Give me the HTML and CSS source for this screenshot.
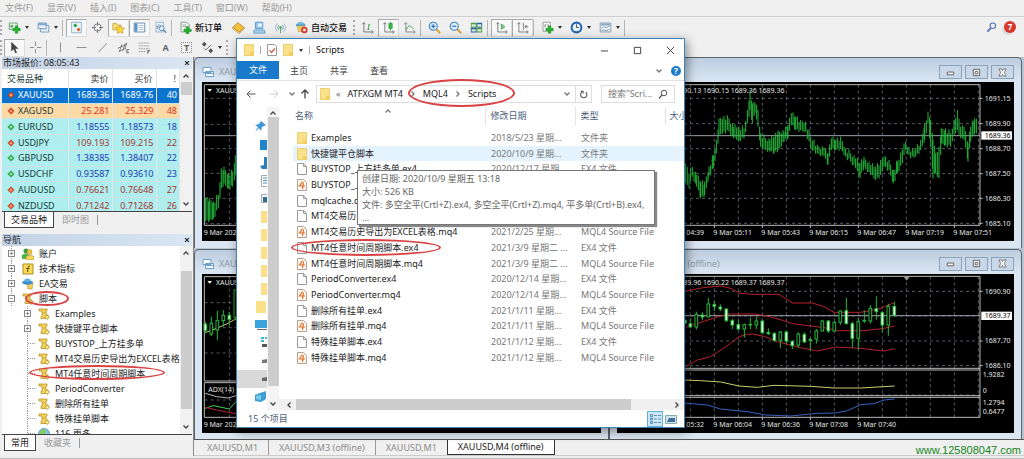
FILE: index.html
```html
<!DOCTYPE html>
<html lang="zh-CN">
<head>
<meta charset="utf-8">
<title>MetaTrader 4</title>
<link rel="stylesheet" href="styles.css">
</head>
<body>
<svg class="sprite" aria-hidden="true">
  <defs>
    <symbol id="newchart" viewBox="0 0 16 16"><path d="M1.500 2.500h10v8h-10z" fill="#dff0dc" stroke="#5f9a72"/><path d="M3 5h3v3H3z" fill="#5f9a72"/><path d="M9 6h3v3h3v3h-3v3H9v-3H6V9h3z" fill="#22b52b" stroke="#12801a" stroke-width=".6"/></symbol>
    <symbol id="profiles" viewBox="0 0 16 16"><path d="M4.500 5.500h10v8h-10z" fill="#fff" stroke="#5b86b0"/><path d="M1.500 2.500h10v7h-10z" fill="#e8f1fa" stroke="#5b86b0"/><path d="M2 3h9v2H2zM6 11h7" fill="#7fa8d0" stroke="#7fa8d0" stroke-width=".6"/></symbol>
    <symbol id="market" viewBox="0 0 16 16"><path d="M2 1.500h12v13H2z" fill="#eaf3fa" stroke="#7aa6cb"/><path d="M4 5l3-2 2 3-3 2z" fill="#28a43a"/><path d="M8 10l3-2 2 3-3 2z" fill="#d6612e"/></symbol>
    <symbol id="target" viewBox="0 0 16 16" fill="none" stroke="#666"><circle cx="8" cy="8" r="4.500"/><path d="M8 1v5M8 10v5M1 8h5M10 8h5"/></symbol>
    <symbol id="star" viewBox="0 0 16 16"><path d="M1 3h5l1 2h4v6H1z" fill="#f7dc75" stroke="#b8932c" stroke-width=".8"/><path d="M10 5l1.700 3.400 3.800.4-2.700 2.600.6 3.800L10 13.500l-3.400 1.700.6-3.800L4.500 8.800l3.800-.4z" fill="#ffd83a" stroke="#b8932c" stroke-width=".8"/></symbol>
    <symbol id="terminal" viewBox="0 0 16 16"><path d="M1.500 2.500h13v11h-13z" fill="#fff" stroke="#4a7aa8"/><path d="M2 3h3.500v10H2z" fill="#5d93c7"/><path d="M7 5.500h6M7 8h6M7 10.500h6" stroke="#9ab6d2"/></symbol>
    <symbol id="tester" viewBox="0 0 16 16"><path d="M2.500 1.500h9v12h-9z" fill="#edf4fb" stroke="#86a8c8"/><path d="M4 10V6M6 8V4M8 9V5" stroke="#4a7aa8"/><circle cx="9.500" cy="9" r="3" fill="#dcecf8" stroke="#557ea6"/><path d="M12 11l3 3.500" stroke="#557ea6" stroke-width="1.500"/></symbol>
    <symbol id="order" viewBox="0 0 16 16"><path d="M2.500 1.500h7l3 3v9h-10z" fill="#f4f7f4" stroke="#7b8c7b"/><path d="M4 5h5M4 7h6" stroke="#8ca08c"/><path d="M9 7h3v3h3v3h-3v3H9v-3H6v-3h3z" fill="#22b52b" stroke="#12801a" stroke-width=".6"/></symbol>
    <symbol id="book" viewBox="0 0 16 16"><path d="M1 8l6-6 8 6-6 6z" fill="#f2c13c" stroke="#b07c18"/><path d="M1 8v2l8 5.500 6-6V8l-6 6z" fill="#fff3c4" stroke="#b07c18" stroke-width=".7"/></symbol>
    <symbol id="person" viewBox="0 0 16 16"><path d="M3 1.500h9v8H3z" fill="#8fc4ee" stroke="#4f8fc4"/><path d="M6 3h5v4H6z" fill="#e9f6ff"/><path d="M1 11h13l1 4H1z" fill="#a9d0ee" stroke="#4f8fc4" stroke-width=".8"/></symbol>
    <symbol id="signal" viewBox="0 0 16 16" fill="none"><path d="M4 3a7 7 0 000 10M12 3a7 7 0 010 10" stroke="#8aa9c5"/><path d="M6 5a4 4 0 000 6M10 5a4 4 0 010 6" stroke="#5a8cb8"/><circle cx="8" cy="8" r="1.500" fill="#35a04a"/><path d="M8 9v6" stroke="#35a04a"/></symbol>
    <symbol id="auto" viewBox="0 0 16 16"><ellipse cx="7" cy="5" rx="6" ry="2.500" fill="#58a5d8"/><path d="M3 4a4 3 0 018 0z" fill="#79bce4"/><path d="M3 6l1 7h7l1-7z" fill="#f0ce66" stroke="#b18a28" stroke-width=".6"/><circle cx="11.500" cy="11" r="4" fill="#d8392b"/><path d="M10 9.500h3v3h-3z" fill="#fff"/></symbol>
    <symbol id="bars" viewBox="0 0 16 16" fill="none" stroke="#666"><path d="M3.500 2v11.500H15M1.500 4l2-2 2 2M13 11.500l2 2-2 2"/><path d="M9.500 4v7M9.500 5h2M7.500 10h2" stroke="#279a37"/></symbol>
    <symbol id="candles" viewBox="0 0 16 16" fill="none" stroke="#666"><path d="M3.500 2v11.500H15M1.500 4l2-2 2 2M13 11.500l2 2-2 2"/><path d="M10.500 1v11" stroke="#279a37"/><path d="M8.500 3h4v6h-4z" fill="#37bd45" stroke="#279a37"/></symbol>
    <symbol id="line" viewBox="0 0 16 16" fill="none" stroke="#777"><path d="M3.500 2v11.500H15M1.500 4l2-2 2 2M13 11.500l2 2-2 2"/><path d="M4 11c3-7 5-6 9-1" stroke="#279a37"/></symbol>
    <symbol id="zoomin" viewBox="0 0 16 16"><path d="M10 10l5 5" stroke="#d5a32c" stroke-width="2.500"/><circle cx="6.500" cy="6.500" r="5" fill="#dff0fb" stroke="#3f81bd" stroke-width="1.300"/><path d="M4 6.500h5M6.500 4v5" stroke="#2870b0" stroke-width="1.500"/></symbol>
    <symbol id="zoomout" viewBox="0 0 16 16"><path d="M10 10l5 5" stroke="#d5a32c" stroke-width="2.500"/><circle cx="6.500" cy="6.500" r="5" fill="#dff0fb" stroke="#3f81bd" stroke-width="1.300"/><path d="M4 6.500h5" stroke="#2870b0" stroke-width="1.500"/></symbol>
    <symbol id="tile" viewBox="0 0 16 16"><path d="M1 2h7v6H1zM8 8h7v6H8z" fill="#4a9d3f"/><path d="M8 2h7v6H8zM1 8h7v6H1z" fill="#2c64a8"/><path d="M2 4h5v3H2zM9 4h5v3H9zM2 10h5v3H2zM9 10h5v3H9z" fill="#d9ecd4"/></symbol>
    <symbol id="scroll" viewBox="0 0 16 16" fill="none" stroke="#666"><path d="M3.500 2v11.500H15M1.500 4l2-2 2 2M13 11.500l2 2-2 2"/><path d="M8 4l4 3-4 3z" fill="#9bd6a0" stroke="#279a37"/></symbol>
    <symbol id="shift" viewBox="0 0 16 16" fill="none" stroke="#666"><path d="M3.500 2v11.500H15M1.500 4l2-2 2 2M13 11.500l2 2-2 2M9 2v9"/><path d="M15 7h-4l2-2M11 7l2 2" stroke="#555"/></symbol>
    <symbol id="indic" viewBox="0 0 16 16"><path d="M2.500 1.500h9v11h-9z" fill="#fff" stroke="#888"/><path d="M6 4c-1 0-1 1-1 4M8 4c1 0 1 4 1 4" stroke="#555" fill="none"/><path d="M9 6h3v3h3v3h-3v3H9v-3H6V9h3z" fill="#22b52b" stroke="#12801a" stroke-width=".6"/></symbol>
    <symbol id="clock" viewBox="0 0 16 16"><circle cx="8" cy="8" r="6" fill="#e7f3fc" stroke="#2465ad" stroke-width="2.500"/><path d="M8 4v4h3" fill="none" stroke="#333"/></symbol>
    <symbol id="template" viewBox="0 0 16 16"><path d="M1.500 2.500h13v11h-13z" fill="#f2f7fb" stroke="#7a93ab"/><path d="M2 3h12v2.500H2z" fill="#87aacb"/><path d="M3 9l3-2 3 1 4-2M3 12l3-1 3 1 4-2" fill="none" stroke="#6b8a9d"/></symbol>
    <symbol id="cursor" viewBox="0 0 16 16"><path d="M4 1v12l3-3 2 5 2-1-2-4.500h4z" fill="#444"/></symbol>
    <symbol id="cross" viewBox="0 0 16 16" stroke="#777"><path d="M8 1v5M8 10v5M1 8h5M10 8h5"/></symbol>
    <symbol id="vline" viewBox="0 0 16 16" stroke="#777"><path d="M8 2v12"/></symbol>
    <symbol id="hline" viewBox="0 0 16 16" stroke="#777"><path d="M2 8h12"/></symbol>
    <symbol id="trend" viewBox="0 0 16 16" stroke="#777"><path d="M3 14L13 3"/></symbol>
    <symbol id="channel" viewBox="0 0 16 16" stroke="#666" fill="none"><path d="M1 9l11-5M2 13l9-4M3 13l3-9M7 12l3-9M10 9l2-7M15 10.500h-3v4h3M12 12.500h2"/></symbol>
    <symbol id="fibo" viewBox="0 0 16 16" stroke="#888" fill="none"><path d="M1 2.500h13M1 6h13M1 9.500h13M1 13h9" stroke-dasharray="2 1"/><path d="M12 15.500v-4h3M12 13.500h2" stroke="#555"/></symbol>
    <symbol id="arrows" viewBox="0 0 16 16" fill="#555"><path d="M4 1l3 3-3 3-3-3zM12 9l3 3-3 3-3-3z"/><path d="M4 9l2 2 6-6" stroke="#555" fill="none"/></symbol>
    <symbol id="glass" viewBox="0 0 16 16" fill="none" stroke="#4d6fb5"><circle cx="10" cy="5.500" r="4" stroke-width="1.500"/><path d="M7 9l-5 5" stroke-width="2.500"/></symbol>
    <symbol id="dn" viewBox="0 0 10 10"><path d="M5 1l4 4-4 4-4-4z" fill="#e0552c" stroke="#a5381a" stroke-width=".7"/><path d="M3.500 4.500h3L5 7z" fill="#ffd9c8"/></symbol>
    <symbol id="up" viewBox="0 0 10 10"><path d="M5 1l4 4-4 4-4-4z" fill="#3dbb55" stroke="#1e8438" stroke-width=".7"/><path d="M3.500 5.500h3L5 3z" fill="#d9ffe0"/></symbol>
    <symbol id="script" viewBox="0 0 12 12"><path d="M1 1h8v2H8v4h2v3.500H3V8.500h1V3H1z" fill="#f6d65a" stroke="#b8922a" stroke-width=".8"/><path d="M4 5h4" stroke="#b8922a" stroke-width=".6"/><path d="M9 7l2.500 2.200L9 11.500 6.800 9.200z" fill="#ffe98d" stroke="#a98424" stroke-width=".7"/></symbol>
    <symbol id="acct" viewBox="0 0 12 12"><circle cx="4" cy="3" r="2.500" fill="#3f9b3f"/><path d="M0 11V7q4-3 7 0v4z" fill="#4db34d"/><circle cx="7.500" cy="4" r="2.500" fill="#f3c244" stroke="#a5801e" stroke-width=".5"/><path d="M4 12V8.500q4-3 8 0V12z" fill="#f6d65a" stroke="#a5801e" stroke-width=".5"/></symbol>
    <symbol id="func" viewBox="0 0 12 12"><path d="M1 1h10v10H1z" fill="#f8da58" stroke="#b08c24"/><path d="M8 3q-2-.5-2 2L5.500 9M4 5.500h3.500" fill="none" stroke="#6b4f08"/></symbol>
    <symbol id="ea" viewBox="0 0 12 12"><path d="M5 5h6l-1 6H6z" fill="#f4cf5c" stroke="#a5801e" stroke-width=".5"/><ellipse cx="5.500" cy="4.500" rx="5.500" ry="2.200" fill="#3d8fca"/><path d="M2 3.500a3.500 3 0 017 0z" fill="#66b2e2"/></symbol>
    <symbol id="globe" viewBox="0 0 12 12"><circle cx="6" cy="6" r="5.500" fill="#7fc6e8" stroke="#3f86a8" stroke-width=".7"/><path d="M2 4q3-4 5-2T5 7 2 8zM7 6q4 0 3 3-3 3-3 0z" fill="#8ccf4c"/></symbol>
    <symbol id="wins" viewBox="0 0 12 12" fill="#fff" stroke="#6f9fc8"><path d="M1 1.500h8v5H1zM3.500 5.500h8v5h-8z"/><path d="M4 7.500h7" /></symbol>
    <symbol id="folder" viewBox="0 0 10 12"><path d="M.5.500h9v11h-9z" fill="#fbe08a" stroke="#efd070"/><path d="M6 8h4v4H6z" fill="#f3cf62"/></symbol>
    <symbol id="file" viewBox="0 0 10 12"><path d="M.5.500h6l3 3v8h-9z" fill="#fff" stroke="#999"/><path d="M6.500.500v3h3" fill="none" stroke="#999"/></symbol>
    <symbol id="mq" viewBox="0 0 10 12"><path d="M.5.500h6l3 3v8h-9z" fill="#fffaf6" stroke="#b7a08c"/><path d="M5.500 2.500L2.500 7h5.500M6.500 3.500L5.500 10" fill="none" stroke="#e06b25" stroke-width="1.200"/></symbol>
    <symbol id="check" viewBox="0 0 10 12"><path d="M.5.500h7l2 2v9h-9z" fill="#fff" stroke="#999"/><path d="M2.500 6l2 2.500 3.500-4" fill="none" stroke="#d4533a" stroke-width="1.200"/></symbol>
    <symbol id="chu" viewBox="0 0 8 8"><path d="M1.500 5.500L4 3l2.500 2.500" fill="none" stroke="currentColor" stroke-width="1.300"/></symbol>
    <symbol id="chd" viewBox="0 0 8 8"><path d="M1.500 2.500L4 5l2.500-2.500" fill="none" stroke="currentColor" stroke-width="1.300"/></symbol>
    <symbol id="chl" viewBox="0 0 8 8"><path d="M5.500 1.500L3 4l2.500 2.500" fill="none" stroke="currentColor" stroke-width="1.300"/></symbol>
    <symbol id="chr" viewBox="0 0 8 8"><path d="M2.500 1.500L5 4 2.500 6.500" fill="none" stroke="currentColor" stroke-width="1.300"/></symbol>
    <symbol id="x" viewBox="0 0 8 8"><path d="M1.500 1.500l5 5M6.500 1.500l-5 5" fill="none" stroke="currentColor" stroke-width="1.500"/></symbol>
    <symbol id="min" viewBox="0 0 10 10"><path d="M1.500 4.500h7v3h-7z" fill="#fff" stroke="#555"/></symbol>
    <symbol id="max" viewBox="0 0 10 10"><path d="M1.500 1.500h7v7h-7z" fill="#fff" stroke="#555"/><path d="M3.500 4h3v2.500h-3z" fill="none" stroke="#555"/></symbol>
    <symbol id="close" viewBox="0 0 10 10"><path d="M1 1h3l1 2 1-2h3L7 5l2 4H6L5 7 4 9H1l2-4z" fill="#fff" stroke="#555" stroke-width=".8"/></symbol>
  </defs>
</svg>

<nav class="menubar">
  <button>文件(F)</button><button>显示(V)</button><button>插入(I)</button><button>图表(C)</button><button>工具(T)</button><button>窗口(W)</button><button>帮助(H)</button>
</nav>

<div class="toolbar">
  <i class="grip"></i>
  <button class="tb" aria-label="新图表"><svg><use href="#newchart"/></svg></button><i class="caret"></i>
  <button class="tb" aria-label="配置"><svg><use href="#profiles"/></svg></button><i class="caret"></i>
  <i class="sep"></i>
  <button class="tb on" aria-label="市场报价"><svg><use href="#market"/></svg></button>
  <button class="tb" aria-label="数据窗口"><svg><use href="#target"/></svg></button>
  <button class="tb on" aria-label="导航"><svg><use href="#star"/></svg></button>
  <button class="tb on" aria-label="终端"><svg><use href="#terminal"/></svg></button>
  <button class="tb" aria-label="测试"><svg><use href="#tester"/></svg></button>
  <i class="sep"></i>
  <button class="tb wide"><svg><use href="#order"/></svg>新订单</button>
  <button class="tb" aria-label="编辑器"><svg><use href="#book"/></svg></button>
  <button class="tb" aria-label="社区"><svg><use href="#person"/></svg></button>
  <button class="tb" aria-label="信号"><svg><use href="#signal"/></svg></button>
  <button class="tb wide"><svg><use href="#auto"/></svg>自动交易</button>
  <i class="grip"></i>
  <button class="tb" aria-label="柱状图"><svg><use href="#bars"/></svg></button>
  <button class="tb on" aria-label="蜡烛图"><svg><use href="#candles"/></svg></button>
  <button class="tb" aria-label="折线图"><svg><use href="#line"/></svg></button>
  <i class="sep"></i>
  <button class="tb" aria-label="放大"><svg><use href="#zoomin"/></svg></button>
  <button class="tb" aria-label="缩小"><svg><use href="#zoomout"/></svg></button>
  <button class="tb" aria-label="平铺"><svg><use href="#tile"/></svg></button>
  <i class="sep"></i>
  <button class="tb on" aria-label="滚动"><svg><use href="#scroll"/></svg></button>
  <button class="tb on" aria-label="平移"><svg><use href="#shift"/></svg></button>
  <i class="sep"></i>
  <button class="tb" aria-label="指标"><svg><use href="#indic"/></svg></button><i class="caret"></i>
  <button class="tb" aria-label="周期"><svg><use href="#clock"/></svg></button><i class="caret"></i>
  <button class="tb" aria-label="模板"><svg><use href="#template"/></svg></button><i class="caret"></i>
  <i class="sep"></i>
  <span class="grow"></span>
  <button class="tb" aria-label="搜索"><svg class="small"><use href="#glass"/></svg></button>
  <button class="alert">7</button>
</div>

<div class="toolbar second">
  <i class="grip"></i>
  <button class="tb on" aria-label="光标"><svg><use href="#cursor"/></svg></button>
  <button class="tb" aria-label="十字线"><svg><use href="#cross"/></svg></button>
  <i class="sep"></i>
  <button class="tb" aria-label="垂直线"><svg><use href="#vline"/></svg></button>
  <button class="tb" aria-label="水平线"><svg><use href="#hline"/></svg></button>
  <button class="tb" aria-label="趋势线"><svg><use href="#trend"/></svg></button>
  <button class="tb" aria-label="通道"><svg><use href="#channel"/></svg></button>
  <button class="tb" aria-label="斐波那契"><svg><use href="#fibo"/></svg></button>
  <button class="tb letter">A</button>
  <button class="tb letter"><span class="boxed">T</span></button>
  <button class="tb" aria-label="箭头"><svg><use href="#arrows"/></svg></button><i class="caret"></i>
  <i class="grip"></i>
</div>

<main class="main">
  <aside class="side">
    <section class="panel market">
      <header class="phead"><span>市场报价: 08:05:43</span><button aria-label="关闭"><svg><use href="#x"/></svg></button></header>
      <div class="pbody">
        <div class="clip">
          <table class="quotes">
            <thead><tr><th>交易品种</th><th>卖价</th><th>买价</th><th>!</th></tr></thead>
            <tbody>
              <tr class="sel"><td><svg><use href="#dn"/></svg>XAUUSD</td><td>1689.36</td><td>1689.76</td><td>40</td></tr>
              <tr class="hot red"><td><svg><use href="#dn"/></svg>XAGUSD</td><td>25.281</td><td>25.329</td><td>48</td></tr>
              <tr><td><svg><use href="#up"/></svg>EURUSD</td><td>1.18555</td><td>1.18573</td><td>18</td></tr>
              <tr class="red"><td><svg><use href="#dn"/></svg>USDJPY</td><td>109.193</td><td>109.215</td><td>22</td></tr>
              <tr><td><svg><use href="#up"/></svg>GBPUSD</td><td>1.38385</td><td>1.38407</td><td>22</td></tr>
              <tr><td><svg><use href="#up"/></svg>USDCHF</td><td>0.93587</td><td>0.93610</td><td>23</td></tr>
              <tr class="red"><td><svg><use href="#dn"/></svg>AUDUSD</td><td>0.76621</td><td>0.76648</td><td>27</td></tr>
              <tr class="red"><td><svg><use href="#dn"/></svg>NZDUSD</td><td>0.71242</td><td>0.71268</td><td>26</td></tr>
            </tbody>
          </table>
        </div>
        <div class="vbar"><svg><use href="#chu"/></svg><i class="thumb short"></i><span class="grow"></span><svg><use href="#chd"/></svg></div>
      </div>
      <div class="ptabs"><button class="cur">交易品种</button><button>即时图</button><i></i></div>
    </section>
    <section class="panel nav">
      <header class="phead"><span>导航</span><button aria-label="关闭"><svg><use href="#x"/></svg></button></header>
      <div class="pbody">
        <ul class="tree">
          <li><i class="box">+</i><svg><use href="#acct"/></svg>账户</li>
          <li><i class="box">+</i><svg><use href="#func"/></svg>技术指标</li>
          <li><i class="box">+</i><svg><use href="#ea"/></svg>EA交易</li>
          <li><i class="box">−</i><svg><use href="#script"/></svg><span>脚本</span><i class="ring ring-root"></i></li>
          <li class="sub"><i class="box">+</i><svg><use href="#script"/></svg>Examples</li>
          <li class="sub"><i class="box">+</i><svg><use href="#script"/></svg>快捷键平仓脚本</li>
          <li class="sub"><i class="stub"></i><svg><use href="#script"/></svg>BUYSTOP_上方挂多单</li>
          <li class="sub"><i class="stub"></i><svg><use href="#script"/></svg>MT4交易历史导出为EXCEL表格</li>
          <li class="sub"><i class="stub"></i><svg><use href="#script"/></svg><span>MT4任意时间周期脚本</span><i class="ring ring-item"></i></li>
          <li class="sub"><i class="stub"></i><svg><use href="#script"/></svg>PeriodConverter</li>
          <li class="sub"><i class="stub"></i><svg><use href="#script"/></svg>删除所有挂单</li>
          <li class="sub"><i class="stub"></i><svg><use href="#script"/></svg>特殊挂单脚本</li>
          <li class="sub"><i class="stub"></i><svg><use href="#globe"/></svg>116 更多...</li>
        </ul>
        <div class="vbar"><svg><use href="#chu"/></svg><span class="gap"></span><i class="thumb grow"></i><span class="gap"></span><svg><use href="#chd"/></svg></div>
      </div>
      <div class="ptabs"><button class="cur">常用</button><button>收藏夹</button><i></i></div>
    </section>
  </aside>

  <div class="work">
    <div class="windows">
      <section class="cwin">
        <header><svg><use href="#wins"/></svg><span>XAUUSD,M1</span></header>
        <div class="plot"><svg id="c1" width="104" height="159" viewBox="606 81 312 477"></svg></div>
      </section>
      <section class="cwin">
        <header><svg><use href="#wins"/></svg><span>XAUUSD,M1</span><span class="grow"></span><button aria-label="最小化"><svg><use href="#min"/></svg></button><button aria-label="最大化"><svg><use href="#max"/></svg></button><button aria-label="关闭"><svg><use href="#close"/></svg></button></header>
        <div class="plot end"><svg id="c2" width="330" height="159" viewBox="0 66 990 477"></svg></div>
      </section>
      <section class="cwin">
        <header><svg><use href="#wins"/></svg><span>XAUUSD,M3 (offline)</span></header>
        <div class="plot"><svg id="c3" width="104" height="159" viewBox="606 142 312 477"></svg></div>
      </section>
      <section class="cwin">
        <header><svg><use href="#wins"/></svg><span>XAUUSD,M4 (offline)</span><span class="grow"></span><button aria-label="最小化"><svg><use href="#min"/></svg></button><button aria-label="最大化"><svg><use href="#max"/></svg></button><button aria-label="关闭"><svg><use href="#close"/></svg></button></header>
        <div class="plot end"><svg id="c4" width="330" height="159" viewBox="0 97 990 477"></svg></div>
      </section>
    </div>
    <nav class="ctabs">
      <button>XAUUSD,M1</button><button>XAUUSD,M3 (offline)</button><button class="last">XAUUSD,M1</button><button class="cur">XAUUSD,M4 (offline)</button>
      <span class="grow"></span><span class="site">www.125808047.com</span>
    </nav>
  </div>
</main>
<footer class="foot"></footer>

<section class="explorer" role="dialog" aria-label="Scripts">
  <header class="etitle">
    <svg class="f"><use href="#folder"/></svg><i class="bar"></i><svg class="f"><use href="#check"/></svg><svg class="f"><use href="#folder"/></svg><i class="caret"></i><i class="bar"></i><span>Scripts</span>
    <span class="grow"></span>
    <button aria-label="最小化"><svg viewBox="0 0 10 10"><path d="M1 5.500h8" stroke="#333"/></svg></button>
    <button aria-label="最大化"><svg viewBox="0 0 10 10"><path d="M1.500 1.500h7v7h-7z" fill="none" stroke="#333"/></svg></button>
    <button aria-label="关闭"><svg viewBox="0 0 10 10"><path d="M1 1l8 8M9 1L1 9" stroke="#333"/></svg></button>
  </header>
  <nav class="ribbon"><button class="cur">文件</button><button>主页</button><button>共享</button><button>查看</button><span class="grow"></span><svg class="ch"><use href="#chd"/></svg><button class="help">?</button></nav>
  <div class="address">
    <button class="go" aria-label="后退"><svg viewBox="0 0 10 10"><path d="M9.500 5H1M4.500 1.500L1 5l3.500 3.500" fill="none" stroke="#555"/></svg></button>
    <button class="go" aria-label="前进"><svg viewBox="0 0 10 10"><path d="M.5 5H9M5.500 1.500L9 5 5.500 8.500" fill="none" stroke="#ccc"/></svg></button>
    <svg class="ch"><use href="#chd"/></svg>
    <button class="go" aria-label="上移"><svg viewBox="0 0 10 10"><path d="M5 9.500V1M1.500 4.500L5 1l3.500 3.500" fill="none" stroke="#444" stroke-width="1.300"/></svg></button>
    <div class="path"><svg class="f"><use href="#folder"/></svg><span class="lead">«</span><a href="#">ATFXGM MT4</a><svg class="ch"><use href="#chr"/></svg><a href="#">MQL4</a><svg class="ch"><use href="#chr"/></svg><a href="#">Scripts</a><span class="grow"></span><svg class="ch"><use href="#chd"/></svg><button class="reload" aria-label="刷新"><svg viewBox="0 0 10 10"><path d="M7.500 2.500A3.500 3.500 0 113 2.500M2 1.500h2.500V4" fill="none" stroke="#555" stroke-width="1.200"/></svg></button><i class="ring ring-path"></i></div>
    <label class="search"><input type="text" placeholder='搜索"Scri...' aria-label="搜索"><svg viewBox="0 0 10 10"><circle cx="6" cy="4" r="2.800" fill="none" stroke="#555"/><path d="M4 6L1 9.500" stroke="#555" stroke-width="1.200"/></svg></label>
  </div>
  <div class="ebody">
    <div class="places">
      <svg viewBox="0 0 14 14"><path d="M8 1l5 4-4 2-1 4-2-3-4 4 3-5-3-2 4-1z" fill="#3f95d6"/></svg>
      <svg viewBox="0 0 14 14"><path d="M7 2h7v10H7z" fill="#1e84cc"/></svg>
      <svg viewBox="0 0 14 14"><path d="M11 1h3v12H9l-2-3 4-1z" fill="#2e7fb8"/></svg>
      <svg viewBox="0 0 14 14"><path d="M8.500 1.500h6v11h-6z" fill="#fff" stroke="#aaa"/><path d="M10 4h4M10 6.500h4M10 9h4" stroke="#4f91b8"/></svg>
      <svg viewBox="0 0 14 14"><path d="M8.500 2.500h6v8h-6z" fill="#eef5fa" stroke="#aaa"/><path d="M10 5h4v5h-4z" fill="#2f6f94"/></svg>
      <svg viewBox="0 0 14 14"><path d="M8 1h6v12H8z" fill="#fbe08a"/></svg>
      <svg viewBox="0 0 14 14"><path d="M8 1h6v12H8z" fill="#fbe08a"/></svg>
      <svg viewBox="0 0 14 14"><path d="M8 1h6v12H8z" fill="#fbe08a"/></svg>
      <svg viewBox="0 0 14 14"><path d="M8 1h6v12H8z" fill="#fbe08a"/></svg>
      <svg viewBox="0 0 14 14"><path d="M8 1h6v12H8z" fill="#fbe08a"/></svg>
      <svg viewBox="0 0 14 14"><path d="M3 1h10v12H3z" fill="#fbe08a"/></svg>
      <svg viewBox="0 0 14 14"><path d="M2 2h12v8H2z" fill="#3ba3de"/><path d="M4 11.500h10" stroke="#667"/></svg>
      <svg viewBox="0 0 14 14"><path d="M8 1h3v2H8zM12 1h2v2h-2zM8 4h3v2H8z" fill="#38b6e0"/><path d="M9 8h5v3H9z" fill="#555"/></svg>
      <svg viewBox="0 0 14 14"><path d="M9 6l5-1v4H9z" fill="#777"/></svg>
      <span class="drive"><svg viewBox="0 0 14 14"><path d="M9 6l5-1v4H9z" fill="#666"/></svg></span>
      <svg viewBox="0 0 14 14"><path d="M2 5l5-2 6-2v8l-5 3-6-1z" fill="#3c9fd0"/><path d="M3 6l5-1v5l-5-1z" fill="#7fcbea"/></svg>
    </div>
    <div class="vbar long"><svg><use href="#chu"/></svg><i class="thumb grow"></i><span class="gap"></span><svg><use href="#chd"/></svg></div>
    <div class="files">
      <table>
        <colgroup><col class="c-name"><col class="c-date"><col class="c-type"><col></colgroup>
        <thead><tr><th>名称<svg class="ch sort"><use href="#chu"/></svg></th><th>修改日期</th><th>类型</th><th>大小</th></tr></thead>
        <tbody>
          <tr class="spacer"><td colspan="4"></td></tr>
          <tr><td><svg class="f"><use href="#folder"/></svg>Examples</td><td>2018/5/23 星期...</td><td>文件夹</td><td></td></tr>
          <tr class="hl"><td><svg class="f"><use href="#folder"/></svg>快捷键平仓脚本</td><td>2020/10/9 星期...</td><td>文件夹</td><td></td></tr>
          <tr><td><svg class="f"><use href="#file"/></svg>BUYSTOP_上方挂多单.ex4</td><td>2020/12/17 星期...</td><td>EX4 文件</td><td></td></tr>
          <tr><td><svg class="f"><use href="#mq"/></svg>BUYSTOP_上方挂多单.mq4</td><td>2020/12/17 星期...</td><td>MQL4 Source File</td><td></td></tr>
          <tr><td><svg class="f"><use href="#file"/></svg>mqlcache.dat</td><td>2021/3/9 星期二 ...</td><td>DAT 文件</td><td></td></tr>
          <tr><td><svg class="f"><use href="#file"/></svg>MT4交易历史导出为EXCEL表格.ex4</td><td>2021/2/25 星期...</td><td>EX4 文件</td><td></td></tr>
          <tr><td><svg class="f"><use href="#mq"/></svg>MT4交易历史导出为EXCEL表格.mq4</td><td>2021/2/25 星期...</td><td>MQL4 Source File</td><td></td></tr>
          <tr><td><svg class="f"><use href="#file"/></svg>MT4任意时间周期脚本.ex4<i class="ring ring-file"></i></td><td>2021/3/9 星期二 ...</td><td>EX4 文件</td><td></td></tr>
          <tr><td><svg class="f"><use href="#mq"/></svg>MT4任意时间周期脚本.mq4</td><td>2021/3/9 星期二 ...</td><td>MQL4 Source File</td><td></td></tr>
          <tr><td><svg class="f"><use href="#file"/></svg>PeriodConverter.ex4</td><td>2020/12/14 星期...</td><td>EX4 文件</td><td></td></tr>
          <tr><td><svg class="f"><use href="#mq"/></svg>PeriodConverter.mq4</td><td>2020/12/14 星期...</td><td>MQL4 Source File</td><td></td></tr>
          <tr><td><svg class="f"><use href="#file"/></svg>删除所有挂单.ex4</td><td>2021/1/11 星期...</td><td>EX4 文件</td><td></td></tr>
          <tr><td><svg class="f"><use href="#mq"/></svg>删除所有挂单.mq4</td><td>2021/1/11 星期...</td><td>MQL4 Source File</td><td></td></tr>
          <tr><td><svg class="f"><use href="#file"/></svg>特殊挂单脚本.ex4</td><td>2021/1/12 星期...</td><td>EX4 文件</td><td></td></tr>
          <tr><td><svg class="f"><use href="#mq"/></svg>特殊挂单脚本.mq4</td><td>2021/1/12 星期...</td><td>MQL4 Source File</td><td></td></tr>
        </tbody>
      </table>
      <span class="grow"></span>
      <div class="hbar"><svg><use href="#chl"/></svg><i></i><svg><use href="#chr"/></svg></div>
    </div>
  </div>
  <footer class="estatus"><span>15 个项目</span><span class="grow"></span>
    <button class="view on" aria-label="详细信息"><svg viewBox="0 0 12 12" fill="none" stroke="#5a8fae"><path d="M1.500 1.500h2v2h-2zM1.500 5h2v2h-2zM1.500 8.500h2v2h-2zM5 2.500h3M9 2.500h3M5 6h3M9 6h3M5 9.500h3M9 9.500h3"/></svg></button>
    <button class="view" aria-label="大图标"><svg viewBox="0 0 12 12"><path d="M.5 2.500h11v8H.5z" fill="#cfe3f0" stroke="#8aa"/><path d="M4 5h6v4H2z" fill="#3f6f96"/></svg></button>
  </footer>
  <div class="tip" role="tooltip">
    <p>创建日期: 2020/10/9 星期五 13:18</p><p>大小: 526 KB</p><p>文件: 多空全平(Crtl+Z).ex4, 多空全平(Crtl+Z).mq4, 平多单(Crtl+B).ex4,</p><p>...</p>
  </div>
</section>
<script src="charts.js"></script>
</body>
</html>
```

FILE: styles.css
```css
* { box-sizing: border-box; }
body {
  margin: 0;
  height: 100vh;
  display: flex;
  flex-direction: column;
  background: #f0f0f0;
  color: #222;
  font: 9px/12px "Noto Sans", "Noto Sans CJK SC", sans-serif;
  position: relative;
  overflow: hidden;
}
button, input { font: inherit; color: inherit; border: 0; padding: 0; margin: 0; background: none; }
svg { flex: none; display: block; }
p, ul { margin: 0; padding: 0; list-style: none; }
a { color: inherit; text-decoration: none; }
.sprite { position: absolute; width: 0; height: 0; }
.grow { flex: 1; }

.menubar { display: flex; gap: 14px; height: 17px; flex: none; padding: 0 5px; align-items: center; color: #999; border-bottom: 1px solid #cfcfcf; }

.toolbar { display: flex; align-items: center; height: 21px; flex: none; }
.toolbar.second { height: 19px; }
.tb { width: 21px; height: 18px; display: flex; align-items: center; justify-content: center; flex: none; border: 1px solid transparent; }
.tb svg { width: 13px; height: 13px; }
.tb svg.small { width: 11px; height: 11px; }
.tb.on { background: #f8f8f8; border-color: #aaa #ddd #ddd #aaa; }
.tb.wide { width: auto; padding: 0 5px 0 3px; color: #111; font-weight: 500; gap: 3px; }
.tb.letter { color: #666; font-weight: 700; }
.boxed { border: 1px dotted #888; padding: 0 2px; line-height: 9px; }
.grip { width: 4px; height: 15px; flex: none; border-left: 2px dotted #aaa; }
.sep { width: 4px; height: 16px; flex: none; border-left: 1px solid #b5b5b5; }
.caret { width: 8px; flex: none; display: flex; justify-content: flex-start; }
.caret::before { content: ""; border: 2px solid transparent; border-top: 3px solid #333; border-bottom: 0; }
.alert { width: 12px; height: 12px; margin: 0 8px 2px 2px; border-radius: 50%; background: #d8382c; color: #fff; font-size: 8px; line-height: 12px; font-weight: 700; box-shadow: -2px 2px 0 #ddd; }

.main { flex: 1; display: flex; min-height: 0; }
.side { width: 193px; flex: none; display: flex; flex-direction: column; gap: 6px; padding: 0 1px 5px 2px; min-height: 0; }
.panel { display: flex; flex-direction: column; min-height: 0; }
.market { height: 171px; flex: none; }
.nav { flex: 1; }
.phead { display: flex; height: 12px; justify-content: space-between; align-items: center; padding: 0 2px 0 1px; background: linear-gradient(90deg, #c3d2e6, #dbe6f3); flex: none; }
.phead svg { width: 6px; height: 6px; }
.pbody { flex: 1; display: flex; min-height: 0; background: #fff; border-bottom: 1px solid #444; overflow: hidden; }
.clip { flex: 1; overflow: hidden; }
.quotes { width: 100%; height: 145px; border-collapse: collapse; table-layout: fixed; }
.quotes th, .quotes td { padding: 0 2px 0 0; text-align: right; font-weight: 400; line-height: 12px; border-right: 1px solid #dfe6e6; border-bottom: 1px solid #cfe2e2; color: #1d39b5; }
.quotes th { height: 19px; color: #333; padding-right: 3px; border-bottom: 0; }
.quotes th:first-child, .quotes td:first-child { width: 66px; text-align: left; padding-left: 5px; color: #1c3b38; }
.quotes th:nth-child(2), .quotes th:nth-child(3) { width: 44px; }
.quotes td svg { display: inline-block; width: 8px; height: 8px; margin-right: 3px; vertical-align: -1px; }
.quotes tbody tr { background: #aeeeee; }
.quotes .red td:nth-child(n+2) { color: #a8352f; }
.quotes .hot { background: #fcd9a5; }
.quotes .hot td:nth-child(n+2) { color: #e0331d; }
.quotes tbody .sel { background: #0c74cf; }
.quotes .sel td, .quotes .sel td:first-child { color: #fff; }
.vbar { width: 12px; flex: none; background: #f1f1f1; display: flex; flex-direction: column; align-items: center; color: #444; padding: 3px 0; }
.vbar svg { width: 8px; height: 8px; }
.vbar .thumb { width: 11px; background: #cdcdcd; }
.vbar .short { height: 13px; margin-top: 2px; }
.vbar .gap { height: 14px; }
.ptabs { display: flex; height: 16px; flex: none; align-items: stretch; padding-left: 2px; color: #999; }
.ptabs button { padding: 0 8px; }
.ptabs .cur { background: #fff; color: #222; border: 1px solid #444; border-top: 0; padding: 0 6px; }
.ptabs i { border-left: 1px solid #999; margin: 3px 0; }
.tree { flex: 1; overflow: hidden; white-space: nowrap; position: relative; }
.tree li { position: relative; display: flex; align-items: center; height: 15px; padding-left: 6px; }
.tree li svg { width: 12px; height: 12px; margin: 0 5px 0 7px; position: relative; z-index: 1; }
.tree li::before { content: ""; position: absolute; left: 9px; top: 0; height: 15px; border-left: 1px dotted #999; }
.tree .sub { padding-left: 22px; }
.tree .sub::before { left: 25px; }
.box { position: relative; width: 7px; height: 7px; border: 1px solid #888; background: #fff; font: 7px/5px "Noto Sans", sans-serif; text-align: center; color: #333; }
.stub { width: 7px; height: 1px; margin-left: 4px; margin-right: -4px; border-top: 1px dotted #999; }
.ring { position: absolute; border: 2px solid #d94343; border-radius: 50%; z-index: 3; pointer-events: none; }
.ring-root { left: 23px; top: 0; width: 44px; height: 15px; }
.ring-item { left: 27px; top: -1px; width: 136px; height: 15px; }

.work { flex: 1; min-width: 0; display: flex; flex-direction: column; border-left: 1px solid #888; }
.windows { flex: 1; min-height: 0; display: grid; grid-template-columns: 415px 1fr; grid-template-rows: 1fr 1fr; row-gap: 1px; padding-right: 2px; background: #b8c4d0; }
.cwin { border: 1px solid #59636d; border-bottom: 0; border-radius: 5px 5px 0 0; background: linear-gradient(#bccddf, #dbe6f3 24px); padding: 0 7px 6px; min-width: 0; overflow: hidden; }
.cwin header { display: flex; align-items: center; gap: 3px; height: 24px; color: #8f9aa6; padding-top: 4px; }
.cwin header > svg { width: 12px; height: 12px; margin-right: 2px; }
.cwin header button { width: 23px; height: 14px; border: 1px solid #8fa3b8; background: #c9d8e9; display: grid; place-items: center; }
.cwin header button svg { width: 9px; height: 9px; }
.plot { background: #000; display: flex; overflow: hidden; }
.plot.end { justify-content: flex-end; }
.plot text { font: 21px "Noto Sans", sans-serif; fill: #e4e4e4; }
.plot .mark { fill: #000; }
.grid { stroke: #7d8994; stroke-width: 2; stroke-dasharray: 9 9; fill: none; }
.frame { stroke: #b8b8b8; stroke-width: 3; fill: none; }
.bid { stroke: #9aa3aa; stroke-width: 3; }
.up { stroke: #24b83c; stroke-width: 3; fill: #000; }
.down { stroke: #24b83c; stroke-width: 3; fill: #e9ffe9; }
.band { stroke: #b8202a; stroke-width: 3; fill: none; }
.adx { stroke: #c9cf6a; stroke-width: 3; fill: none; }
.blue { stroke: #3a62c4; stroke-width: 3; fill: none; }
.green { stroke: #3fd04f; stroke-width: 3; fill: none; }
.ctabs { display: flex; height: 17px; flex: none; align-items: stretch; color: #8c8c8c; border-top: 1px solid #555; border-bottom: 1px solid #ccc; }
.ctabs button { padding: 0 10px; border-right: 1px solid #999; line-height: 14px; }
.ctabs button:first-child { padding-left: 13px; }
.ctabs .cur { background: #fff; color: #222; border: 1px solid #333; border-top: 0; }
.ctabs .last { border-right: 0; }
.site { color: #108418; font: 11px/20px "Liberation Sans", sans-serif; margin-right: 3px; position: relative; z-index: 2; }
.foot { height: 3px; flex: none; border-bottom: 1px solid #bbb; }

.explorer { position: absolute; left: 236px; top: 38px; width: 449px; height: 390px; background: #fff; border: 1px solid #3f83b5; display: flex; flex-direction: column; box-shadow: 2px 3px 10px rgba(0, 0, 0, .45); }
.explorer .f { width: 10px; height: 12px; }
.explorer .ch { width: 8px; height: 8px; color: #777; }
.etitle { display: flex; height: 22px; align-items: center; gap: 6px; padding-left: 7px; color: #111; flex: none; }
.etitle .bar { width: 1px; height: 8px; background: #aaa; }
.etitle .caret { width: 4px; }
.etitle button { width: 27px; display: grid; place-items: center; }
.etitle button svg { width: 9px; height: 9px; }
.ribbon { display: flex; height: 20px; align-items: center; flex: none; border-bottom: 1px solid #e3e3e3; color: #444; }
.ribbon button { width: 40px; height: 18px; }
.ribbon .cur { width: 42px; background: #1979ca; color: #fff; align-self: flex-start; }
.ribbon .help { width: 10px; height: 10px; border-radius: 50%; background: #1979ca; color: #fff; line-height: 10px; font-weight: 700; margin: 0 3px 0 8px; }
.address { display: flex; align-items: center; height: 26px; padding: 0 9px; flex: none; }
.go { width: 12px; margin-right: 11px; }
.go svg { width: 10px; height: 10px; }
.address > .ch { margin: 0 4px 0 -4px; }
.address > .ch + .go { margin-right: 4px; }
.path { position: relative; flex: 1; height: 18px; display: flex; align-items: center; border: 1px solid #ddd; padding-left: 3px; color: #222; margin-right: 9px; }
.path a + .ch { margin: 0 6px; }
.lead { margin: 0 7px 0 6px; color: #666; }
.reload { width: 16px; height: 16px; border-left: 1px solid #ddd; margin-left: 4px; display: grid; place-items: center; }
.reload svg { width: 9px; height: 9px; }
.ring-path { left: 91px; top: -7px; width: 107px; height: 28px; }
.search { width: 74px; height: 18px; display: flex; align-items: center; border: 1px solid #ddd; padding: 0 6px; }
.search input { width: 0; flex: 1; outline: 0; }
.search input::placeholder { color: #777; opacity: 1; }
.search svg { width: 10px; height: 10px; }
.ebody { flex: 1; display: flex; min-height: 0; }
.places { width: 30px; flex: none; display: flex; flex-direction: column; align-items: flex-end; padding-top: 13px; gap: 4px; }
.places svg { width: 14px; height: 14px; }
.places .drive { width: 30px; height: 18px; margin: -2px 0; background: #d9d9d9; display: flex; justify-content: flex-end; align-items: center; }
.vbar.long { background: #f4f4f4; padding: 2px 0; }
.files { flex: 1; min-width: 0; overflow: hidden; display: flex; flex-direction: column; }
.files table { width: 391px; height: 259px; margin-left: 14px; border-collapse: collapse; table-layout: fixed; }
.c-name { width: 192px; }
.c-date, .c-type { width: 90px; }
.files th { height: 18px; font-weight: 400; text-align: left; color: #4c607a; padding: 0 0 0 5px; border-right: 1px solid #e5e5e5; position: relative; white-space: nowrap; }
.files th:first-child { padding-left: 2px; }
.files th:last-child { border: 0; padding-left: 4px; }
.sort { position: absolute; left: 91px; top: 0; }
.files td { padding: 0 0 0 6px; white-space: nowrap; color: #777; line-height: 12px; position: relative; overflow: visible; }
.files td:first-child { padding-left: 4px; color: #222; }
.files td svg { display: inline-block; vertical-align: -3px; margin-right: 4px; }
.files .spacer td { height: 5px; line-height: 0; padding: 0; }
.files .hl { background: #e5f3ff; }
.ring-file { left: -2px; top: -1px; width: 150px; height: 17px; }
.hbar { display: flex; height: 11px; background: #f0f0f0; align-items: center; color: #444; flex: none; padding: 0 3px 0 6px; }
.hbar svg { width: 8px; height: 8px; }
.hbar i { width: 335px; height: 11px; background: #cdcdcd; margin: 0 auto 0 3px; }
.estatus { display: flex; align-items: center; height: 17px; flex: none; padding: 0 5px 0 11px; color: #4c607a; }
.view { width: 16px; height: 16px; display: grid; place-items: center; border: 1px solid transparent; }
.view svg { width: 12px; height: 12px; }
.view.on { background: #cce8f6; border-color: #62b1dc; }
.tip { position: absolute; left: 120px; top: 131px; width: 298px; height: 55px; padding: 1px 4px; background: #fff; border: 1px solid #777; box-shadow: 2px 2px 1px #888; color: #666; line-height: 13px; white-space: nowrap; z-index: 2; }
```

FILE: charts.js
```js
const NS = 'http://www.w3.org/2000/svg';

function add(id, tag, attrs, text) {
  const el = document.createElementNS(NS, tag);
  for (const k in attrs) el.setAttribute(k, attrs[k]);
  if (text) el.textContent = text;
  document.getElementById(id).appendChild(el);
}
const path = (id, cls, d) => add(id, 'path', { class: cls, d });
const label = (id, x, y, text, cls) => add(id, 'text', { x, y, class: cls || '' }, text);

function grid(id, xs, ys, x0, x1, y0, y1) {
  path(id, 'grid', xs.map(x => `M${x} ${y0}V${y1}`).join('') + ys.map(y => `M${x0} ${y}H${x1}`).join(''));
}

/* keys: [x, high, low]; one bar every `step` units */
function rangeBars(id, keys, step) {
  let d = '', n = 0;
  for (let i = 0; i < keys.length - 1; i++) {
    const [xa, ha, la] = keys[i], [xb, hb, lb] = keys[i + 1];
    for (let x = xa; x < xb; x += step) {
      const t = (x - xa) / (xb - xa), j = t === 0 ? 0 : [6, -4, 9, -7, 2][n % 5];
      d += `M${x} ${ha + (hb - ha) * t + j}V${la + (lb - la) * t + j * 0.6}`;
      n++;
    }
  }
  path(id, 'up', d);
}

/* candles: [x, high, bodyTop, bodyBottom, low, filled] */
function candles(id, list) {
  for (const [x, h, t, b, l, f] of list) {
    path(id, 'up', `M${x} ${h}V${l}`);
    add(id, 'rect', { class: f ? 'down' : 'up', x: x - 4, y: t, width: 8, height: b - t });
  }
}

const cols = [19, 91, 163, 235, 307, 379, 451, 523, 595, 667, 739, 811, 883];

/* M1, right */
grid('c2', cols, [115, 191, 266, 341, 415, 490], 0, 888, 74, 496);
path('c2', 'frame', 'M0 74H888V496H0M91 496v8M235 496v8M379 496v8M523 496v8M667 496v8M811 496v8M888 115h8M888 191h8M888 266h8M888 341h8M888 415h8M888 490h8');
path('c2', 'bid', 'M0 227H888');
rangeBars('c2', [[5,310,370],[15,340,385],[25,320,350],[38,345,380],[50,365,415],[62,365,405],[75,320,350],[88,285,325],[97,240,280],[105,175,225],[120,168,215],[135,175,215],[148,200,235],[165,200,240],[180,205,235],[190,150,190],[198,92,150],[205,130,190],[213,130,160],[222,150,200],[230,220,260],[245,235,270],[258,240,275],[270,230,280],[282,212,270],[300,215,245],[312,195,235],[322,160,195],[335,170,210],[350,180,210],[365,185,215],[380,230,265],[400,255,280],[420,265,290],[432,280,315],[442,235,270],[455,240,270],[470,230,265],[485,265,290],[500,280,305],[515,295,325],[528,310,355],[540,290,320],[560,315,345],[575,320,360],[590,300,345],[600,290,320],[615,300,330],[628,330,370],[640,305,340],[655,270,310],[665,245,270],[680,275,295],[695,265,290],[710,240,270],[722,190,240],[732,155,190],[740,180,260],[747,240,355],[755,280,340],[765,260,355],[772,205,250],[785,205,255],[800,220,260],[810,180,220],[820,150,210],[830,200,235],[840,200,240],[852,250,305],[860,200,245],[872,175,220],[879,182,224]], 5);
label('c2', -26, 98, '1690.13 1690.15 1689.36 1689.36');
[['1691.15', 122], ['1689.90', 198], ['1688.70', 273], ['1687.50', 348], ['1686.30', 422], ['1685.10', 497]].forEach(a => label('c2', 902, a[1], a[0]));
add('c2', 'rect', { x: 892, y: 214, width: 92, height: 25, fill: '#fff' });
label('c2', 902, 234, '1689.36', 'mark');
label('c2', -56, 525, '9 Mar 04:39');
['05:11', '05:43', '06:15', '06:47', '07:19', '07:51'].forEach((t, i) => label('c2', 88 + i * 144, 525, '9 Mar ' + t));

/* M4, right */
grid('c4', cols, [149, 223, 298, 372, 460], 0, 888, 104, 527);
path('c4', 'frame', 'M0 104H888V527H0M0 380H888M0 385H888M0 462H888M0 467H888M91 527v8M235 527v8M379 527v8M523 527v8M888 149h8M888 298h8M888 372h8');
path('c4', 'bid', 'M0 222H888');
path('c4', 'band', 'M5 148Q60 135 110 133Q145 138 165 155L210 158H285L325 184H385L420 195L450 212H530L580 203L632 183');
path('c4', 'band', 'M5 257Q70 235 130 217H210Q260 222 325 246L420 258L460 267H540L595 261L632 253');
path('c4', 'band', 'M5 375L40 355L80 345L140 305Q170 276 205 277Q240 280 280 300L350 318L400 328L455 316L530 320L600 328L632 321');
path('c4', 'adx', 'M0 415L50 417L110 421L165 433L220 437L270 431L380 434L450 439H530L632 433');
path('c4', 'blue', 'M0 484L70 490L110 502L190 510L245 520L320 523L400 515L455 514L490 507L530 489L570 486L600 475L632 472');
candles('c4', [[3,232,236,244,250,1],[19,232,246,256,260,1],[37,210,218,256,264,0],[55,212,220,226,236,1],[73,168,187,226,226,0],[91,178,189,194,208,1],[109,188,196,202,208,1],[127,200,202,237,242,1],[145,232,237,250,262,1],[163,236,249,262,266,1],[181,246,249,262,288,0],[199,228,248,250,262,1],[217,226,238,250,262,0],[235,236,238,273,278,1],[253,260,272,276,280,1],[271,272,275,296,300,1],[289,268,271,296,320,0],[307,267,271,298,306,1],[325,296,299,312,322,1],[343,272,277,310,318,0],[361,272,278,301,304,1],[379,288,294,296,326,1],[397,262,268,292,306,0],[415,234,238,268,268,0],[433,236,238,268,274,1],[451,238,242,268,268,0],[469,206,208,242,250,0],[487,168,207,246,248,1],[505,240,246,290,318,1],[523,228,240,290,324,0],[541,206,236,238,244,1],[559,190,200,238,246,0],[577,164,201,210,234,1],[595,208,213,250,270,1],[613,186,194,250,282,0],[631,180,194,222,224,1]]);
add('c4', 'path', { d: 'M659 105h18l-9 12z', fill: '#999' });
label('c4', -26, 130, '1689.96 1690.22 1689.37 1689.37');
[['1690.90', 157], ['1687.70', 305], ['1686.10', 380]].forEach(a => label('c4', 902, a[1], a[0]));
[['1.9282', 406], ['0', 454], ['1.2794', 489], ['0.6477', 518]].forEach(a => label('c4', 896, a[1], a[0]));
add('c4', 'rect', { x: 892, y: 210, width: 92, height: 25, fill: '#fff' });
label('c4', 902, 230, '1689.37', 'mark');
label('c4', -56, 556, '9 Mar 05:32');
['06:04', '06:36', '07:08', '07:40'].forEach((t, i) => label('c4', 88 + i * 144, 556, '9 Mar ' + t));

/* left column */
grid('c1', [688, 760], [130, 208, 281, 355, 430, 506], 614, 918, 89, 511);
path('c1', 'frame', 'M918 89H613V511H918');
path('c1', 'bid', 'M613 242H918');
rangeBars('c1', [[616,430,500],[628,430,495],[640,440,490],[655,420,460],[664,340,400],[672,335,385],[685,355,400],[698,350,395],[706,300,360],[720,280,330]], 5);
add('c1', 'path', { d: 'M622 102h14l-7 8z', fill: '#fff' });
label('c1', 648, 113, 'XAUUSD,M1');
label('c1', 611, 540, '9 Mar 2021');

grid('c3', [688, 760], [228, 303, 379, 520], 614, 918, 150, 572);
path('c3', 'frame', 'M918 150H613V463H918M918 468H613V572H918');
path('c3', 'adx', 'M616 318L650 305L680 292L720 270');
candles('c3', [[616,285,292,312,320,1],[634,270,290,322,328,0],[652,252,282,310,340,0],[670,250,266,282,300,0],[688,255,266,278,296,1],[706,190,190,272,280,0]]);
add('c3', 'path', { d: 'M622 163h14l-7 8z', fill: '#fff' });
label('c3', 648, 175, 'XAUUSD,M3');
label('c3', 625, 496, 'ADX(14)');
path('c3', 'frame', 'M616 500L650 510L685 514L712 506');
path('c3', 'green', 'M616 545L640 537L688 547L712 520');
path('c3', 'band', 'M616 542L650 550L712 562');
label('c3', 611, 601, '9 Mar 2021');
```
